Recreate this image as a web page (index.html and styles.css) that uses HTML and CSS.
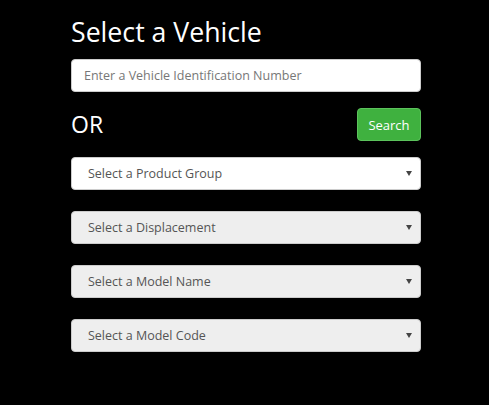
FILE: index.html
```html
<!DOCTYPE html>
<html lang="en">
<head>
  <meta charset="UTF-8" />
  <meta name="viewport" content="width=device-width, initial-scale=1.0"/>
  <title>Select a Vehicle</title>
  <link rel="stylesheet" href="styles.css">
</head>
<body>

  <div class="container">
    <h1>Select a Vehicle</h1>

    <input type="text" class="field" id="vinInput" placeholder="Enter a Vehicle Identification Number" />

    <div class="or-row">
      <span class="or">OR</span>
      <button class="search-btn" id="searchBtn">Search</button>
    </div>

    <div class="select-list">
      <div class="select-box">
        <select class="field">
          <option>Select a Product Group</option>
        </select>
      </div>
      <div class="select-box">
        <select class="field" disabled>
          <option>Select a Displacement</option>
        </select>
      </div>
      <div class="select-box">
        <select class="field" disabled>
          <option>Select a Model Name</option>
        </select>
      </div>
      <div class="select-box">
        <select class="field" disabled>
          <option>Select a Model Code</option>
        </select>
      </div>
    </div>
  </div>

</body>
</html>
```

FILE: styles.css
```css
* { box-sizing: border-box; margin: 0; padding: 0; }
body {
  font-family: "Open Sans", sans-serif;
  background: #000;
  color: #fff;
}
.container {
  width: 350px;
  margin-left: 71px;
  padding-top: 16px;
}
.container h1 {
  font-weight: 400;
  font-size: 26.7px;
  line-height: 32px;
  margin-bottom: 11px;
}
.field {
  display: block;
  width: 100%;
  height: 33px;
  border: 1px solid #ccc;
  border-radius: 4px;
  background: #fff;
  font-family: "Open Sans", sans-serif;
  font-size: 12.5px;
  color: #555;
}
input.field {
  padding: 0 12px;
}
input.field::placeholder {
  color: #777;
}
.or-row {
  display: flex;
  justify-content: space-between;
  align-items: center;
  margin-top: 16px;
}
.or {
  font-size: 23px;
  line-height: 33px;
}
.search-btn {
  width: 64px;
  height: 33px;
  background: #3fb13f;
  border: 1px solid #5cc25c;
  border-radius: 4px;
  color: #fff;
  font-family: "Open Sans", sans-serif;
  font-size: 13px;
  cursor: pointer;
}
.select-list {
  display: flex;
  flex-direction: column;
  gap: 21px;
  margin-top: 16px;
}
.select-box {
  position: relative;
}
.select-box select {
  appearance: none;
  -webkit-appearance: none;
  padding: 0 30px 0 16px;
  opacity: 1;
}
.select-box select:disabled {
  background: #eee;
  color: #555;
}
.select-box::after {
  content: "";
  position: absolute;
  right: 9px;
  top: 14px;
  border-left: 3px solid transparent;
  border-right: 3px solid transparent;
  border-top: 5px solid #444;
  pointer-events: none;
}
```
